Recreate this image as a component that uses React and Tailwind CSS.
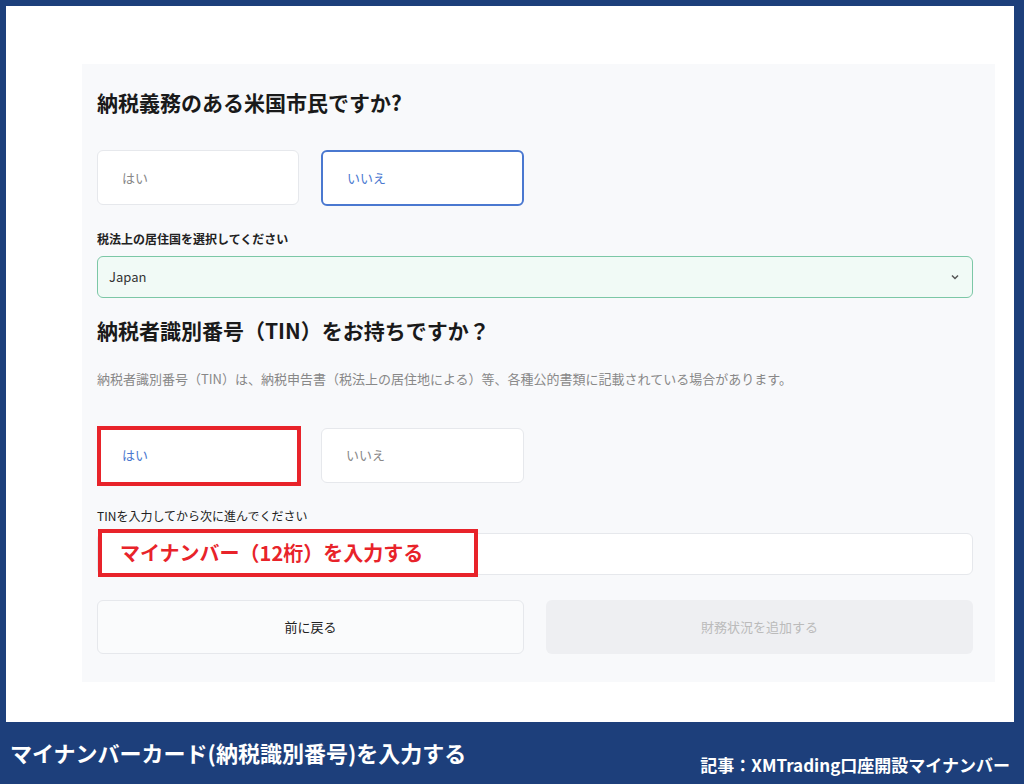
export default function App() {
  const f = { fontFamily: '"Noto Sans CJK JP", Inter, "Noto Sans", sans-serif' };
  return (
    <div style={f} className="w-[1024px] h-[784px] bg-[#1d3f7b] flex flex-col">
      <div className="mt-[6px] ml-[6px] mr-[10px] h-[716px] bg-white pt-[58px] pl-[76px] pr-[19px]">
        <div className="bg-[#f8f9fb] w-[913px] h-[618px] pl-[15px] pr-[22px] pt-[22px]">
          <div className="text-[21px] font-bold text-[#1a1a1a] leading-[32px]">納税義務のある米国市民ですか?</div>
          <div className="flex gap-[22px] mt-[32px]">
            <div className="w-[202px] h-[55px] rounded-md border border-[#e6e8ec] bg-white flex items-center pl-[24px] text-[13px] text-[#888]">はい</div>
            <div className="w-[203px] h-[56px] rounded-md border-2 border-[#4a78d0] bg-white flex items-center pl-[24px] text-[13px] text-[#4a78d0]">いいえ</div>
          </div>
          <div className="mt-[24px] text-[12px] font-bold text-[#222]">税法上の居住国を選択してください</div>
          <div className="mt-[8px] h-[42px] rounded-md border border-[#7cc7a6] bg-[#f1faf6] flex items-center justify-between px-[11px] text-[13px] text-[#333]">
            <span>Japan</span>
            <svg width="12" height="12" viewBox="0 0 24 24" fill="none" stroke="#555" strokeWidth="3"><path d="M6 9l6 6 6-6"/></svg>
          </div>
          <div className="mt-[16px] text-[21px] font-bold text-[#1a1a1a] leading-[32px]">納税者識別番号（TIN）をお持ちですか？</div>
          <div className="mt-[23px] text-[13px] text-[#888]">納税者識別番号（TIN）は、納税申告書（税法上の居住地による）等、各種公的書類に記載されている場合があります。</div>
          <div className="flex gap-[22px] mt-[39px]">
            <div className="relative w-[202px] h-[55px] rounded-md border border-[#e6e8ec] bg-white flex items-center pl-[24px] text-[13px] text-[#4a78d0]">
              はい
              <div className="absolute left-[-1px] top-[-3px] w-[204px] h-[60px] border-[4px] border-[#e8232a]"></div>
            </div>
            <div className="w-[203px] h-[55px] rounded-md border border-[#e6e8ec] bg-white flex items-center pl-[24px] text-[13px] text-[#888]">いいえ</div>
          </div>
          <div className="mt-[24px] text-[12px] text-[#222]">TINを入力してから次に進んでください</div>
          <div className="relative mt-[8px] h-[42px] rounded-md border border-[#e6e8ec] bg-white">
            <div className="absolute left-0 top-[-5px] w-[380px] h-[48px] border-[4px] border-[#e8232a] bg-white flex items-center pl-[18px] text-[20px] font-bold text-[#e8232a]">マイナンバー（12桁）を入力する</div>
          </div>
          <div className="flex gap-[22px] mt-[25px]">
            <div className="w-[427px] h-[54px] rounded-md border border-[#e6e8ec] bg-[#fafbfc] flex items-center justify-center text-[13px] text-[#222]">前に戻る</div>
            <div className="flex-1 h-[54px] rounded-md bg-[#eeeff2] flex items-center justify-center text-[13px] text-[#bbb]">財務状況を追加する</div>
          </div>
        </div>
      </div>
      <div className="flex-1 flex items-center justify-between pl-[10px] pr-[14px]">
        <div className="text-white text-[22px] font-bold mb-[2px]">マイナンバーカード(納税識別番号)を入力する</div>
        <div className="text-white text-[17px] font-bold mt-[24px]">記事：XMTrading口座開設マイナンバー</div>
      </div>
    </div>
  );
}
